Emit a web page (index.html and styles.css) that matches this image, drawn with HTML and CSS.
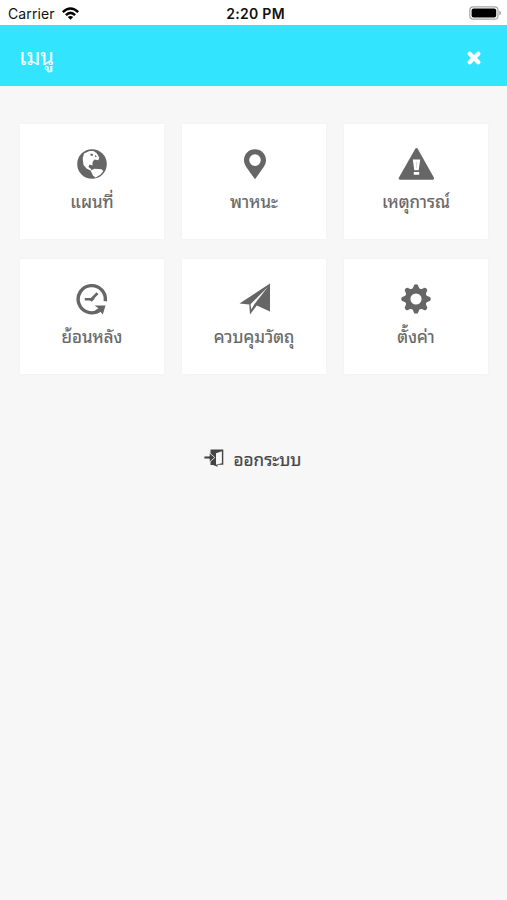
FILE: index.html
```html
<!DOCTYPE html>
<html lang="th">
<head>
<meta charset="UTF-8">
<title>เมนู</title>
<link rel="stylesheet" href="styles.css">
</head>
<body>
	<div class="status">
		<div class="carrier">
			<span>Carrier</span>
			<svg class="wifi" viewBox="0 0 17 13"><path d="M0 4.300Q8.500-3.700 17 4.300L15.400 5.900Q8.500-.5 1.600 5.900Z"/><path d="M3 7.200Q8.500 2 14 7.200L12.200 9Q8.500 5.500 4.800 9Z"/><path d="M5.800 10.100Q8.500 7.700 11.200 10.100L8.500 12.800Z"/></svg>
		</div>
		<div class="time">2:20 PM</div>
		<div class="power">
			<svg class="battery" viewBox="0 0 32 14"><rect x=".8" y=".8" width="28.200" height="12.400" rx="3.500" fill="#fff" stroke="#a5a5a5" stroke-width="1.200"/><rect x="2.600" y="2.500" width="24.600" height="9" rx="2" fill="#000"/><path d="M30.300 4.800Q32 5.500 32 7T30.300 9.200Z" fill="#999"/></svg>
		</div>
	</div>

	<div class="header">
		<h1>เมนู</h1>
		<a href="javascript:;" class="close"><svg viewBox="0 0 14 14"><path d="M2.700 2.700L11.300 11.300M11.300 2.700L2.700 11.300"/></svg></a>
	</div>

	<ul class="menu">
		<li><a href="javascript:;">
			<svg class="icon" viewBox="0 0 36 32"><circle cx="18" cy="16" r="14.800"/><path class="land" d="M15.500 3L10 5.500L8.700 10.500L9.500 17L12.500 20.500L16.500 22.500L17.300 21.300L14.500 19L15.500 16.500L18.500 17.500L18.500 14L20.500 11.500L24.300 12.300L25.300 9.500L22.500 5L19.500 3Z"/><path class="land" d="M16.500 22.500L20.500 20.700L27.500 21.200L29.300 23L26.500 26.500L21.500 29.800L19 27.500Z"/><path d="M16.500 5.500L19.200 6.200L18.500 8L16.500 7.500ZM21 7L23 8.700L21 9Z"/></svg>
			<span>แผนที่</span>
		</a></li>
		<li><a href="javascript:;">
			<svg class="icon" viewBox="0 0 36 32"><path fill-rule="evenodd" d="M19 1.200C12.700 1.200 8 6 8 12.200C8 17.500 12.500 21.500 15.200 26L19 31.200L22.800 26C25.500 21.500 30 17.500 30 12.200C30 6 25.300 1.200 19 1.200ZM19 6.300A5.800 5.800 0 1 1 19 17.900A5.800 5.800 0 1 1 19 6.300Z"/></svg>
			<span>พาหนะ</span>
		</a></li>
		<li><a href="javascript:;">
			<svg class="icon" viewBox="0 0 36 32"><path d="M17.300.8Q18.500-.8 19.700.8L36 29.800Q36.200 31.700 34.500 31.700H2Q.3 31.500 .8 29.800Z"/><path d="M14.800 11.500H22.200L20.700 22.300H16.300ZM15.800 24H21.200V26.700H15.800Z" fill="#fff"/><path d="M17.700 13.500H19.300L18.800 20H18.200Z" fill="#ddd"/></svg>
			<span>เหตุการณ์</span>
		</a></li>
		<li><a href="javascript:;">
			<svg class="icon" viewBox="0 0 36 32"><path class="ring" d="M31.200 18.200A13.600 13.600 0 1 0 25 27.700"/><path class="hand" d="M10.800 16.200H17.500L23.500 10.300"/><path d="M14.500 15.800L17.700 18.800L21 15.500Z"/><path d="M20.500 22.500H31.500L28.800 31.500L26.500 28.800L23 30.500L21 27.500L24.500 25.300Z"/></svg>
			<span>ย้อนหลัง</span>
		</a></li>
		<li><a href="javascript:;">
			<svg class="icon" viewBox="0 0 36 32"><path d="M34 .5V28.500L20.800 22.500L14 31.500L13.300 21.500L3.500 20.500Z"/><path class="land" d="M31.800 4L14.500 21.200L15.300 26.500L18.500 21Z"/></svg>
			<span>ควบคุมวัตถุ</span>
		</a></li>
		<li><a href="javascript:;">
			<svg class="icon" viewBox="0 0 36 32"><g transform="translate(18 16)"><path fill-rule="evenodd" d="M0-11A11 11 0 1 1 0 11A11 11 0 1 1 0-11ZM0-5.600A5.600 5.600 0 1 0 0 5.600A5.600 5.600 0 1 0 0-5.600Z"/><g id="teeth"><path id="tooth" d="M-4-9L-2.500-12.500Q-2.400-14.800 0-14.800T2.500-12.500L4-9Z"/><use href="#tooth" transform="rotate(45)"/><use href="#tooth" transform="rotate(90)"/><use href="#tooth" transform="rotate(135)"/></g><use href="#teeth" transform="rotate(180)"/></g></svg>
			<span>ตั้งค่า</span>
		</a></li>
	</ul>

	<a href="javascript:;" class="logout">
		<svg viewBox="0 0 20 18"><path d="M6.500 5.500V.5H19.300V15.800H13.500V17.700L9 16H6.500V11.500Z"/><path class="door" d="M12 4.200L17.900 2.200V14.300L12 15.800Z"/><path class="arrow" d="M0 7.100H5.300V3.700L10.800 8.500L5.300 13.300V9.900H0Z"/></svg>
		<span>ออกระบบ</span>
	</a>
</body>
</html>
```
FILE: styles.css
```css
*{margin: 0;padding: 0;list-style: none;box-sizing: border-box;}
body{background: #f7f7f7;color: #666;
	font-family: "Noto Sans Thai Looped", "Noto Sans Thai", Loma, "Noto Sans", sans-serif;
}
a{color: inherit;text-decoration: none;}
svg{display: block;}

/* status bar */
.status{height: 25px;padding: 1px 6px 0 8px;background: #fff;color: #111;
	display: grid;grid-template-columns: 1fr auto 1fr;align-items: center;
	font-family: Inter, "Liberation Sans", sans-serif;font-size: 14px;
}
.carrier{display: flex;align-items: center;gap: 7px;letter-spacing: .1px;}
.wifi{width: 17px;height: 13px;fill: #000;}
.time{padding-left: 2px;font-weight: 600;letter-spacing: .3px;}
.power{display: flex;justify-content: flex-end;}
.battery{width: 32px;height: 14px;}

.header{height: 61px;padding: 2px 26px 0 19px;background: #33e4ff;color: #fff;
	display: flex;justify-content: space-between;align-items: center;
}
.header h1{padding-bottom: 4px;font-size: 22px;font-weight: normal;}
.close svg{width: 14px;height: 14px;margin-top: 2px;fill: none;stroke: #fff;stroke-width: 4.200;stroke-linecap: round;}

/* menu tiles */
.menu{padding: 37.500px 19px 0 20px;
	display: grid;grid-template-columns: repeat(3, 1fr);gap: 20px 18px;
}
.menu a{height: 115px;padding-top: 24px;background: #fff;
	display: flex;flex-direction: column;align-items: center;
	box-shadow: 0 0 4px rgba(0, 0, 0, 0.03);
}
.menu span{margin-top: 6px;font-size: 17px;line-height: 30px;-webkit-text-stroke: .2px;}
.icon{width: 36px;height: 32px;margin-left: -1px;fill: #666;}
.icon .land{fill: #fff;}
.icon .ring{fill: none;stroke: #666;stroke-width: 3.400;}
.icon .hand{fill: none;stroke: #666;stroke-width: 2.600;}

.logout{margin-top: 69px;padding-right: 2px;color: #444;
	display: flex;justify-content: center;align-items: center;gap: 10px;
	font-size: 17.200px;line-height: 30px;-webkit-text-stroke: .2px;
}
.logout svg{width: 20px;height: 18px;fill: #444;-webkit-text-stroke: 0;}
.logout .door{fill: #f7f7f7;}
.logout .arrow{stroke: #f7f7f7;stroke-width: .8;}
```
